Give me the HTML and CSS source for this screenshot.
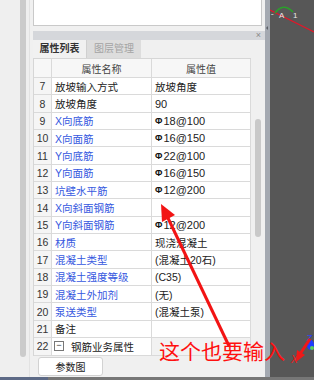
FILE: index.html
```html
<!DOCTYPE html>
<html lang="zh-CN">
<head>
    <meta charset="UTF-8">
    <title>属性列表</title>
    <link rel="stylesheet" href="styles.css">
</head>
<body>
<div class="screen">
    <div class="main">
        <div class="gutter"><div class="gutter-bar"></div></div>

        <div class="panel">
            <div class="preview"></div>
            <div class="panel-title"><span class="close">×</span></div>
            <div class="tabs">
                <div class="tab active">属性列表</div>
                <div class="tab">图层管理</div>
            </div>

            <div class="grid-wrap">
                <div class="prop-grid">
                    <div class="cell num head"></div>
                    <div class="cell head center">属性名称</div>
                    <div class="cell head center">属性值</div>

                    <div class="cell num">7</div><div class="cell">放坡输入方式</div><div class="cell">放坡角度</div>
                    <div class="cell num">8</div><div class="cell">放坡角度</div><div class="cell val">90</div>
                    <div class="cell num">9</div><div class="cell link">X向底筋</div><div class="cell val"><span class="steel">Φ</span>18@100</div>
                    <div class="cell num">10</div><div class="cell link">X向面筋</div><div class="cell val"><span class="steel">Φ</span>16@150</div>
                    <div class="cell num">11</div><div class="cell link">Y向底筋</div><div class="cell val"><span class="steel">Φ</span>22@100</div>
                    <div class="cell num">12</div><div class="cell link">Y向面筋</div><div class="cell val"><span class="steel">Φ</span>16@150</div>
                    <div class="cell num">13</div><div class="cell link">坑壁水平筋</div><div class="cell val"><span class="steel">Φ</span>12@200</div>
                    <div class="cell num">14</div><div class="cell link">X向斜面钢筋</div><div class="cell"></div>
                    <div class="cell num">15</div><div class="cell link">Y向斜面钢筋</div><div class="cell val"><span class="steel">Φ</span>12@200</div>
                    <div class="cell num">16</div><div class="cell link">材质</div><div class="cell">现浇混凝土</div>
                    <div class="cell num">17</div><div class="cell link">混凝土类型</div><div class="cell">(混凝土20石)</div>
                    <div class="cell num">18</div><div class="cell link">混凝土强度等级</div><div class="cell">(C35)</div>
                    <div class="cell num">19</div><div class="cell link">混凝土外加剂</div><div class="cell">(无)</div>
                    <div class="cell num">20</div><div class="cell link">泵送类型</div><div class="cell">(混凝土泵)</div>
                    <div class="cell num">21</div><div class="cell">备注</div><div class="cell"></div>
                    <div class="cell num">22</div><div class="cell group"><span class="fold">−</span>钢筋业务属性</div><div class="cell group-val"></div>
                </div>
                <div class="vscroll"><div class="thumb"></div></div>
            </div>

            <div class="panel-foot"><button class="btn">参数图</button></div>
        </div>

        <div class="splitter"><span class="grip"></span></div>

        <div class="viewport">
            <svg width="44" height="377" viewBox="0 0 44 377">
                <line x1="0" y1="10" x2="44" y2="32" stroke="#e0182a" stroke-width="1.2"/>
                <path d="M5 13 Q13 2 23 12" fill="none" stroke="#2aa02a" stroke-width="1.6"/>
                <text x="1" y="19" fill="#e8e8e8" font-size="8" font-family="Liberation Sans, sans-serif">ˇ</text>
                <text x="9" y="18" fill="#e8e8e8" font-size="8" font-family="Liberation Sans, sans-serif">A</text>
                <text x="23" y="18" fill="#e8e8e8" font-size="8" font-family="Liberation Sans, sans-serif">1</text>

                <text x="37" y="341" fill="#2b3cff" font-size="9" font-family="Liberation Sans, sans-serif">Z</text>
                <ellipse cx="40.5" cy="345" rx="3.5" ry="5" fill="#1f3cff"/>
                <circle cx="42" cy="348" r="2" fill="#5ccf5c"/>
                <line x1="40" y1="339" x2="30" y2="354" stroke="#f01818" stroke-width="3"/>
                <polygon points="26,362 27,350 35,355" fill="#f01818"/>
                <text x="21" y="363" fill="#f01818" font-size="10" font-style="italic" font-family="Liberation Sans, sans-serif">X</text>
            </svg>
        </div>
    </div>
    <div class="statusbar"><span class="status-help"></span></div>

    <svg class="marks" width="314" height="380" viewBox="0 0 314 380">
        <line x1="229" y1="346" x2="167" y2="216" stroke="#f21414" stroke-width="3"/>
        <polygon points="161,204 175,215 162,222" fill="#f21414"/>
    </svg>
    <div class="note">这个也要输入</div>
</div>
</body>
</html>
```

FILE: styles.css
```css
body {
    margin: 0;
    font-family: "Liberation Sans", "Noto Sans CJK SC", sans-serif;
    background-color: #f0f0f0;
}
.screen {
    position: relative;
    width: 314px;
    height: 380px;
    overflow: hidden;
}
.main {
    display: flex;
    height: 377px;
}
.gutter {
    width: 30px;
    box-sizing: border-box;
    padding-left: 20px;
    border-right: 1px solid #e2e2e2;
    background-color: #efefef;
}
.gutter-bar {
    width: 6px;
    height: 357px;
    background-color: #cbcbcb;
    border-radius: 0 0 3px 3px;
}
.panel {
    width: 235px;
    box-sizing: border-box;
    padding-left: 3px;
    display: flex;
    flex-direction: column;
    background-color: #f0f0f0;
}
.preview {
    width: 229px;
    height: 26px;
    box-sizing: border-box;
    background-color: white;
    border: 1px solid #c9c9c9;
    border-top: none;
    margin-bottom: 5px;
}
.panel-title {
    height: 9px;
    background-color: #d5d7db;
    display: flex;
    justify-content: flex-end;
    align-items: center;
    padding-right: 4px;
}
.close {
    font-size: 9px;
    line-height: 9px;
    color: #8a8a8a;
}
.tabs {
    height: 18px;
    display: flex;
}
.tab {
    font-size: 10px;
    line-height: 18px;
    text-align: center;
    box-sizing: border-box;
}
.tab.active {
    width: 53px;
    font-weight: bold;
    color: #333;
    background-color: #f1f1f1;
}
.tab:not(.active) {
    width: 55px;
    color: #a4a4a4;
    background-color: #dddddd;
    border-left: 1px solid #d0d0d0;
}
.grid-wrap {
    display: flex;
    height: 297px;
}
.prop-grid {
    display: grid;
    grid-template-columns: 18px 100px 99px;
    grid-template-rows: 19px repeat(16, 17.35px);
    border-left: 1px solid #d6d6d6;
    border-top: 1px solid #d6d6d6;
    background-color: white;
    align-self: flex-start;
}
.cell {
    box-sizing: border-box;
    border-right: 1px solid #dadada;
    border-bottom: 1px solid #dadada;
    padding-left: 3px;
    font-size: 10.5px;
    color: #222;
    display: flex;
    align-items: center;
    white-space: nowrap;
    overflow: hidden;
}
.cell.num {
    padding-left: 0;
    justify-content: center;
    background-color: #f5f5f5;
    color: #333;
}
.cell.head {
    background-color: #f7f7f7;
    color: #444;
    font-size: 10px;
}
.cell.center {
    justify-content: center;
    padding-left: 0;
}
.cell.link {
    color: #3658e0;
}
.val {
    font-size: 11px;
}
.steel {
    font-size: 9px;
    font-weight: bold;
    margin-right: 1px;
    color: #111;
}
.group {
    padding-left: 2px;
}
.fold {
    width: 8px;
    height: 8px;
    border: 1px solid #777;
    font-size: 9px;
    line-height: 7px;
    text-align: center;
    margin-right: 7px;
    color: #333;
    background-color: white;
}
.group-val {
    background-color: #f2f2f2;
}
.vscroll {
    width: 13px;
    padding-left: 4px;
    box-sizing: border-box;
}
.thumb {
    width: 6px;
    height: 118px;
    margin-top: 61px;
    background-color: #c9c9c9;
    border-radius: 3px;
}
.panel-foot {
    flex: 1;
    padding: 2px 0 0 5px;
}
.btn {
    width: 65px;
    height: 19px;
    padding: 0;
    font-family: "Noto Sans CJK SC", sans-serif;
    font-size: 10px;
    color: #222;
    background-color: white;
    border: 1px solid #d2d2d2;
    border-radius: 3px;
}
.splitter {
    width: 5px;
    background-color: #a4a9b1;
    position: relative;
}
.grip {
    position: absolute;
    top: 26px;
    left: 1px;
    border-top: 2px solid transparent;
    border-bottom: 2px solid transparent;
    border-right: 2px solid #5d6168;
}
.viewport {
    width: 44px;
    background-color: #575757;
}
.viewport svg {
    display: block;
}
.statusbar {
    height: 3px;
    background-color: #777;
}
.status-help {
    display: block;
    width: 48px;
    height: 3px;
    background-color: #5d6a86;
}
.marks {
    position: absolute;
    top: 0;
    left: 0;
    pointer-events: none;
}
.note {
    position: absolute;
    left: 159px;
    top: 337px;
    font-family: "Noto Sans CJK SC", sans-serif;
    font-size: 21px;
    line-height: 26px;
    color: #ff1010;
    white-space: nowrap;
}
```
